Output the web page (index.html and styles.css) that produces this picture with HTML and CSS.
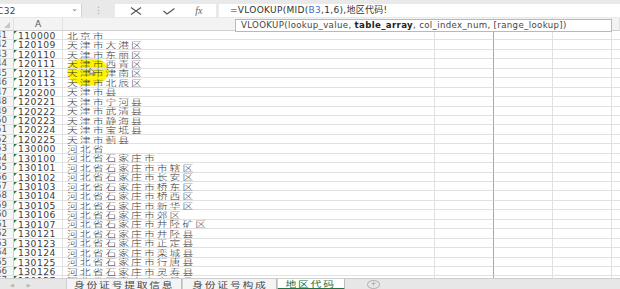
FILE: index.html
```html
<!DOCTYPE html>
<html>
<head>
<meta charset="utf-8">
<link rel="stylesheet" href="styles.css">
</head>
<body>
<div class="app">
  <div class="fbar">
    <div class="namebox"><span class="nm">C32</span><span class="dd">&#8964;</span></div>
    <div class="dots">&#8942;</div>
    <div class="btns">
      <svg class="ic" width="14" height="10" viewBox="0 0 14 10"><path d="M2 1.5 L12 8.5 M2 8.5 L12 1.5" stroke="#555" stroke-width="1.1" fill="none"/></svg>
      <svg class="ic" width="14" height="10" viewBox="0 0 14 10"><path d="M1.5 5 L5 8 L12.5 2.5" stroke="#555" stroke-width="1.1" fill="none"/></svg>
      <span class="fx">fx</span>
    </div>
    <div class="formula">=VLOOKUP(MID(<span class="ref">B3</span>,1,6),地区代码!</div>
  </div>
  <div class="sheet">
    <div class="hd corner"><span class="tri"></span></div>
    <div class="hd colA">A</div>
    <div class="hd"></div>
    <div class="hd"></div>
    <div class="hd"></div>
    <div class="hd"></div>
    <div class="hd last"></div>

    <div class="rh">41</div><div class="a">110000</div><div class="b"><span>北京市</span></div><div class="c"></div><div class="d"></div><div class="e"></div><div class="f"></div>
    <div class="rh">42</div><div class="a">120109</div><div class="b"><span>天津市大港区</span></div><div class="c"></div><div class="d"></div><div class="e"></div><div class="f"></div>
    <div class="rh">43</div><div class="a">120110</div><div class="b"><span>天津市东丽区</span></div><div class="c"></div><div class="d"></div><div class="e"></div><div class="f"></div>
    <div class="rh">44</div><div class="a">120111</div><div class="b"><span>天津市西青区</span></div><div class="c"></div><div class="d"></div><div class="e"></div><div class="f"></div>
    <div class="rh">45</div><div class="a">120112</div><div class="b"><span>天津市津南区</span></div><div class="c"></div><div class="d"></div><div class="e"></div><div class="f"></div>
    <div class="rh">46</div><div class="a">120113</div><div class="b"><span>天津市北辰区</span></div><div class="c"></div><div class="d"></div><div class="e"></div><div class="f"></div>
    <div class="rh">47</div><div class="a">120200</div><div class="b"><span>天津市县</span></div><div class="c"></div><div class="d"></div><div class="e"></div><div class="f"></div>
    <div class="rh">48</div><div class="a">120221</div><div class="b"><span>天津市宁河县</span></div><div class="c"></div><div class="d"></div><div class="e"></div><div class="f"></div>
    <div class="rh">49</div><div class="a">120222</div><div class="b"><span>天津市武清县</span></div><div class="c"></div><div class="d"></div><div class="e"></div><div class="f"></div>
    <div class="rh">50</div><div class="a">120223</div><div class="b"><span>天津市静海县</span></div><div class="c"></div><div class="d"></div><div class="e"></div><div class="f"></div>
    <div class="rh">51</div><div class="a">120224</div><div class="b"><span>天津市宝坻县</span></div><div class="c"></div><div class="d"></div><div class="e"></div><div class="f"></div>
    <div class="rh">52</div><div class="a">120225</div><div class="b"><span>天津市蓟县</span></div><div class="c"></div><div class="d"></div><div class="e"></div><div class="f"></div>
    <div class="rh">53</div><div class="a">130000</div><div class="b"><span>河北省</span></div><div class="c"></div><div class="d"></div><div class="e"></div><div class="f"></div>
    <div class="rh">54</div><div class="a">130100</div><div class="b"><span>河北省石家庄市</span></div><div class="c"></div><div class="d"></div><div class="e"></div><div class="f"></div>
    <div class="rh">55</div><div class="a">130101</div><div class="b"><span>河北省石家庄市市辖区</span></div><div class="c"></div><div class="d"></div><div class="e"></div><div class="f"></div>
    <div class="rh">56</div><div class="a">130102</div><div class="b"><span>河北省石家庄市长安区</span></div><div class="c"></div><div class="d"></div><div class="e"></div><div class="f"></div>
    <div class="rh">57</div><div class="a">130103</div><div class="b"><span>河北省石家庄市桥东区</span></div><div class="c"></div><div class="d"></div><div class="e"></div><div class="f"></div>
    <div class="rh">58</div><div class="a">130104</div><div class="b"><span>河北省石家庄市桥西区</span></div><div class="c"></div><div class="d"></div><div class="e"></div><div class="f"></div>
    <div class="rh">59</div><div class="a">130105</div><div class="b"><span>河北省石家庄市新华区</span></div><div class="c"></div><div class="d"></div><div class="e"></div><div class="f"></div>
    <div class="rh">60</div><div class="a">130106</div><div class="b"><span>河北省石家庄市郊区</span></div><div class="c"></div><div class="d"></div><div class="e"></div><div class="f"></div>
    <div class="rh">61</div><div class="a">130107</div><div class="b"><span>河北省石家庄市井陉矿区</span></div><div class="c"></div><div class="d"></div><div class="e"></div><div class="f"></div>
    <div class="rh">62</div><div class="a">130121</div><div class="b"><span>河北省石家庄市井陉县</span></div><div class="c"></div><div class="d"></div><div class="e"></div><div class="f"></div>
    <div class="rh">63</div><div class="a">130123</div><div class="b"><span>河北省石家庄市正定县</span></div><div class="c"></div><div class="d"></div><div class="e"></div><div class="f"></div>
    <div class="rh">64</div><div class="a">130124</div><div class="b"><span>河北省石家庄市栾城县</span></div><div class="c"></div><div class="d"></div><div class="e"></div><div class="f"></div>
    <div class="rh">65</div><div class="a">130125</div><div class="b"><span>河北省石家庄市行唐县</span></div><div class="c"></div><div class="d"></div><div class="e"></div><div class="f"></div>
    <div class="rh">66</div><div class="a">130126</div><div class="b"><span>河北省石家庄市灵寿县</span></div><div class="c"></div><div class="d"></div><div class="e"></div><div class="f"></div>
    <div class="rh">67</div><div class="a">130127</div><div class="b"><span>河北省石家庄市高邑县</span></div><div class="c"></div><div class="d"></div><div class="e"></div><div class="f"></div>

    <div class="tip">VLOOKUP(lookup_value, <b>table_array</b>, col_index_num, [range_lookup])</div>
    <div class="spot"></div>
    <svg class="cursor" width="8" height="8" viewBox="0 0 8 8"><path d="M1 0.5 L1 6.5 L2.6 5.1 L3.8 7.5 L4.8 7 L3.7 4.7 L5.8 4.7 Z" fill="#fff" stroke="#333" stroke-width="0.6"/></svg>
  </div>
  <div class="tabs">
    <div class="nav"><span>&#9664;</span><span>&#9654;</span></div>
    <div class="tab t1"><span>身份证号提取信息</span></div>
    <div class="tab t2"><span>身份证号构成</span></div>
    <div class="tab t3 active"><span>地区代码</span></div>
    <div class="plus">+</div>
  </div>
</div>
</body>
</html>
```
FILE: styles.css
```css
html, body {
  margin: 0;
  padding: 0;
  background: #fff;
}
.app {
  width: 620px;
  height: 289px;
  overflow: hidden;
  display: flex;
  flex-direction: column;
  font-family: "DejaVu Sans", sans-serif;
  font-size: 9px;
}
.fbar {
  height: 18px;
  flex: none;
  background: #e9e9e9;
  display: flex;
  align-items: flex-start;
  padding-top: 4px;
  box-sizing: border-box;
}
.namebox {
  width: 82px;
  height: 13px;
  background: #fff;
  border-right: 1px solid #d4d4d4;
  display: flex;
  align-items: center;
  justify-content: space-between;
  box-sizing: border-box;
  overflow: hidden;
}
.nm {
  font-size: 9px;
  color: #444;
  margin-left: -3px;
  letter-spacing: 0.4px;
}
.dd {
  font-size: 8px;
  color: #777;
  margin-right: 3px;
  line-height: 8px;
  margin-top: -4px;
}
.dots {
  width: 33px;
  text-align: center;
  font-size: 9px;
  color: #aaa;
  line-height: 13px;
}
.btns {
  width: 101px;
  height: 13px;
  background: #fff;
  display: flex;
  align-items: center;
  justify-content: space-around;
  padding: 0 4px;
  box-sizing: border-box;
}
.fx {
  font-family: "Liberation Serif", serif;
  font-style: italic;
  font-size: 10px;
  color: #666;
}
.formula {
  margin-left: 3px;
  flex: 1;
  height: 13px;
  background: #fff;
  font-family: "DejaVu Sans", "Noto Sans CJK SC", sans-serif;
  font-size: 9px;
  line-height: 13px;
  color: #333;
  padding-left: 11px;
  letter-spacing: 0.3px;
  white-space: nowrap;
}
.ref { color: #3f6fc9; }

.sheet {
  position: relative;
  flex: none;
  height: 260px;
  overflow: hidden;
  display: grid;
  grid-template-columns: 14px 49px 372px 59px 59px 59px 8px;
  grid-template-rows: 13px;
  grid-auto-rows: 9.45px;
}
.sheet > div {
  box-sizing: border-box;
  border-bottom: 1px solid #e1e1e1;
  border-right: 1px solid #e1e1e1;
  overflow: visible;
  white-space: nowrap;
}
.hd {
  background: #f3f3f3;
  border-bottom: 1px solid #cfcfcf !important;
  font-size: 9px;
  color: #555;
  line-height: 12px;
  text-align: center;
}
.corner { position: relative; }
.tri {
  position: absolute;
  right: 3px;
  bottom: 2px;
  width: 0;
  height: 0;
  border-left: 6px solid transparent;
  border-bottom: 6px solid #c6c6c6;
}
.rh {
  background: #f6f6f6;
  border-right: 1px solid #cfcfcf !important;
  font-size: 8.6px;
  line-height: 9px;
  color: #555;
  display: flex;
  justify-content: flex-end;
  padding-right: 6px;
  overflow: hidden !important;
}
.a {
  position: relative;
  font-size: 9.2px;
  line-height: 9px;
  color: #3c3c3c;
  padding-left: 4px;
  letter-spacing: 0.45px;
}
.a::before {
  content: "";
  position: absolute;
  left: 0;
  top: 0;
  border-top: 3px solid #1e7b3a;
  border-right: 3px solid transparent;
}
.b {
  padding-left: 4px;
  position: relative;
  z-index: 1;
  display: flex;
  align-items: center;
}
.b span {
  display: block;
  font-family: "Noto Sans CJK SC", sans-serif;
  font-weight: 300;
  font-size: 8px;
  line-height: 9px;
  color: #333;
  letter-spacing: 1.5px;
  transform: scaleX(1.35);
  transform-origin: 0 50%;
}
.c { border-right: 1px solid #a9a9a9 !important; }
.f { border-right: none !important; }
.tip {
  position: absolute;
  left: 235px;
  top: 1px;
  width: 377px;
  height: 13px;
  background: #fff;
  border: 1px solid #b9b9b9 !important;
  box-sizing: border-box;
  font-family: "DejaVu Sans", sans-serif;
  font-size: 8.6px;
  line-height: 11px;
  color: #444;
  padding-left: 5px;
  letter-spacing: 0.35px;
  z-index: 3;
}
.tip b { color: #222; }
.spot {
  position: absolute;
  left: 67px;
  top: 39px;
  width: 42px;
  height: 29px;
  border-radius: 50%;
  background: radial-gradient(ellipse at center, #fff200 0%, #fff200 60%, rgba(255,242,0,0.6) 85%, rgba(255,242,0,0) 100%);
  border: none !important;
  z-index: 0;
}
.cursor {
  position: absolute;
  left: 89px;
  top: 50px;
  z-index: 4;
}
.tabs {
  flex: 1;
  background: #e7e7e7;
  border-top: 1px solid #cfcfcf;
  display: flex;
  align-items: stretch;
  color: #444;
}
.nav {
  width: 66px;
  display: flex;
  gap: 13px;
  padding-left: 10px;
  box-sizing: border-box;
  font-size: 5px;
  line-height: 6px;
  color: #b5b5b5;
  align-items: center;
}
.tab {
  background: #f4f4f4;
  border-right: 1px solid #bcbcbc;
  border-left: 1px solid #d0d0d0;
  box-sizing: border-box;
  display: flex;
  justify-content: center;
  align-items: center;
}
.tab span {
  display: block;
  font-family: "Noto Sans CJK SC", sans-serif;
  font-size: 8px;
  line-height: 9px;
  letter-spacing: 1.3px;
  transform: scaleX(1.35);
}
.t1 { width: 116px; }
.t2 { width: 95px; }
.t3 { width: 68px; }
.tab.active {
  background: #fff;
  color: #217346;
  border-bottom: 2px solid #217346;
}
.plus {
  margin-left: 22px;
  margin-top: 1px;
  width: 11px;
  height: 7px;
  border: 1px solid #b5b5b5;
  border-radius: 50%;
  font-size: 7px;
  line-height: 7px;
  text-align: center;
  color: #999;
  font-family: "DejaVu Sans", sans-serif;
}
```
